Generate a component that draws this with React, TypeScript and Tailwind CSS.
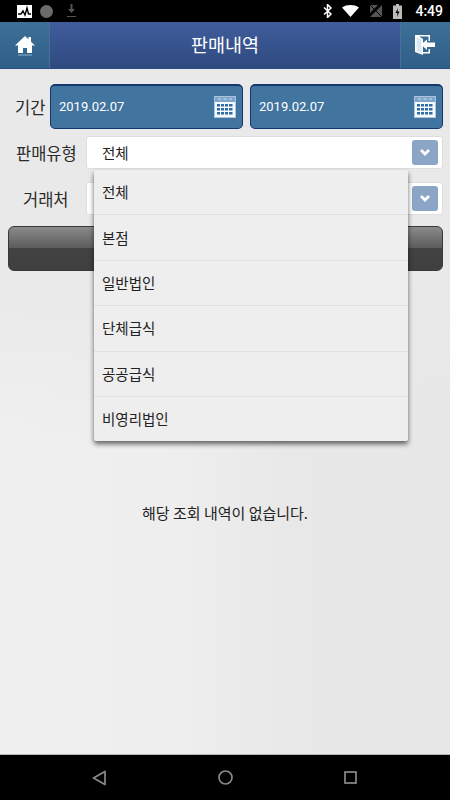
import { Fragment } from "react";

const font = { fontFamily: '"Noto Sans CJK KR", "Liberation Sans", sans-serif' };

const saleTypes = ["전체", "본점", "일반법인", "단체급식", "공공급식", "비영리법인"];

function CalendarIcon() {
  return (
    <svg width="22" height="22" viewBox="0 0 22 22" className="shrink-0">
      <rect x="0.5" y="0.5" width="21" height="21" fill="#f7fafd" stroke="#a9c4dc" />
      <rect x="1" y="1" width="20" height="5" fill="#7fa6ca" />
      <path d="M4 3h3M9.500 3h3M15 3h3" stroke="#c9dcec" strokeWidth="1" />
      <path
        d="M3 8h3v2.500H3zM7 8h3v2.500H7zM11 8h3v2.500h-3zM15 8h3.500v2.500H15zM3 12h3v2.500H3zM7 12h3v2.500H7zM11 12h3v2.500h-3zM15 12h3.500v2.500H15zM3 16h3v2.500H3zM7 16h3v2.500H7zM11 16h3v2.500h-3zM15 16h3.500v2.500H15z"
        fill="#2f6ba8"
      />
    </svg>
  );
}

function DateBox({ value }: { value: string }) {
  return (
    <div className="flex h-[45px] flex-1 items-center justify-between rounded-[5px] border border-[#14366f] border-t-2 bg-[#41749f] pl-[8px] pr-[6px]">
      <span className="text-[13px] text-white" style={{ fontFamily: '"Roboto", sans-serif' }}>
        {value}
      </span>
      <CalendarIcon />
    </div>
  );
}

function SelectBox({ value }: { value: string }) {
  return (
    <div className="flex h-[33px] flex-1 items-center justify-between rounded-[3px] border border-[#dedede] bg-white pl-[15px] pr-[4px]">
      <span className="text-[14.500px] leading-[20px] text-[#222]">{value}</span>
      <div className="flex h-[25px] w-[26px] items-center justify-center rounded-[3px] bg-[#8aa5c6]">
        <svg width="12" height="9" viewBox="0 0 12 9">
          <path d="M2 2l4 4 4-4" fill="none" stroke="#fff" strokeWidth="2.800" />
        </svg>
      </div>
    </div>
  );
}

function Label({ text, className }: { text: string; className: string }) {
  return <span className={`text-[16.500px] leading-[22px] text-[#2a2a2a] ${className}`}>{text}</span>;
}

export default function App() {
  return (
    <div className="flex h-[800px] w-[450px] flex-col overflow-hidden" style={font}>
      {/* status bar */}
      <div className="flex h-[22px] items-center justify-between bg-black pl-[17px] pr-[7px]">
        <div className="flex items-center gap-[8px]">
          <svg width="15" height="13" viewBox="0 0 15 13">
            <rect width="15" height="13" fill="#fff" />
            <path d="M1 9h3l2-3 2 4 2-7 1.500 6H14" fill="none" stroke="#000" strokeWidth="1.400" />
          </svg>
          <div className="h-[13px] w-[13px] rounded-full bg-[#6b6b6b]" />
          <svg width="11" height="14" viewBox="0 0 11 14" className="ml-[5px]">
            <path d="M4.500 0h2v5H9L5.500 9 2 5h2.500zM1 12h9v1H1z" fill="#555" />
          </svg>
        </div>
        <div className="flex items-center gap-[11px]">
          <svg width="10" height="14" viewBox="0 0 10 14">
            <path d="M1 3.500l7 6.500-3.500 3.500V.500L8 4 1 10.500" fill="none" stroke="#fff" strokeWidth="1.500" />
          </svg>
          <svg width="17" height="12" viewBox="0 0 17 12" className="-ml-[2px]">
            <path d="M0 2.500C4.500-.8 12.500-.8 17 2.500L8.500 12z" fill="#fff" />
          </svg>
          <svg width="12" height="12" viewBox="0 0 12 12">
            <path d="M0 12L12 0v12z" fill="#555" />
            <path d="M0 0h8L0 8z" fill="#555" />
            <path d="M0 0l12 12" stroke="#000" strokeWidth="1" />
          </svg>
          <svg width="9" height="15" viewBox="0 0 9 15">
            <path d="M3 0h3v1.500h3V15H0V1.500h3z" fill="#bbb" />
            <path d="M5 4L2.500 9H4.500L4 13 6.500 7.500H4.500z" fill="#000" />
          </svg>
          <span className="ml-[2px] text-[14px] font-medium text-white" style={{ fontFamily: '"Roboto", sans-serif' }}>
            4:49
          </span>
        </div>
      </div>

      {/* header */}
      <div className="flex h-[47px] items-stretch border-b border-[#2b4a7f] bg-gradient-to-b from-[#405d9c] to-[#2f4a80]">
        <div className="flex w-[50px] items-center justify-center border-r border-[#4a6f9c] bg-gradient-to-b from-[#3d7099] to-[#305f86]">
          <svg width="20" height="21" viewBox="0 0 20 21">
            <path d="M10 1L0 10.500h3V18h5v-5h4v5h5v-7.500h3L16 6.700V2h-2.500v2.300z" fill="#fff" />
            <path d="M3 20h14" stroke="#8fb0cc" strokeWidth="1" />
          </svg>
        </div>
        <div className="flex flex-1 items-center justify-center text-[18.500px] text-white">판매내역</div>
        <div className="flex w-[50px] items-center justify-center border-l border-[#4a6f9c] bg-gradient-to-b from-[#3d7099] to-[#305f86]">
          <svg width="20" height="21" viewBox="0 0 20 21" className="ml-[-1px]">
            <path d="M0 0h15v6h-1.500V1.500H4L8 4v13h5.500v-3H15v4.500H8V20L0 17z" fill="#fff" />
            <path d="M1.500 2v14l5 2.500V5z" fill="#dbe8f2" />
            <path d="M20 7.500h-8V4.500L6 9.500l6 5.500v-3h8z" fill="#fff" />
          </svg>
        </div>
      </div>

      {/* body */}
      <div className="relative flex-1 border-b border-[#b5b5b5] bg-[linear-gradient(to_bottom,#e9e9e9_0%,#e9e9e9_30%,rgba(233,233,233,0)_55%),linear-gradient(to_right,#f0f0f0_0%,#eeeeee_40%,#e8e8e8_65%,#e7e7e7_100%)]">
        <div className="flex flex-col pl-[8px] pr-[7px] pt-[15px]">
          <div className="flex items-center">
            <Label text="기간" className="ml-[7px] w-[35px]" />
            <div className="flex flex-1 gap-[7px]">
              <DateBox value="2019.02.07" />
              <DateBox value="2019.02.07" />
            </div>
          </div>
          <div className="mt-[7px] flex items-center">
            <Label text="판매유형" className="ml-[8px] w-[70px]" />
            <SelectBox value="전체" />
          </div>
          <div className="mt-[13px] flex items-center">
            <Label text="거래처" className="ml-[15px] w-[63px]" />
            <SelectBox value="" />
          </div>
          <div className="mt-[11px] h-[45px] rounded-[6px] border border-[#3a3a3a] bg-[linear-gradient(#8a8a8a_0%,#5c5c5c_49%,#434343_50%,#3f3f3f_100%)]" />
        </div>

        <p className="mt-[231px] text-center text-[15px] leading-[22px] text-[#222]">해당 조회 내역이 없습니다.</p>

        {/* dropdown */}
        <div className="absolute left-[94px] top-[101px] w-[314px] rounded-[2px] bg-[#eeeeee] shadow-[0_3px_5px_rgba(0,0,0,0.6)]">
          {saleTypes.map((item, i) => (
            <Fragment key={item}>
              {i > 0 && <div className="h-px bg-[#e0e0e0]" />}
              <div className="flex h-[44.400px] items-center pl-[8px] text-[14.500px] text-[#222]">{item}</div>
            </Fragment>
          ))}
        </div>
      </div>

      {/* nav bar */}
      <div className="flex h-[45px] items-center justify-between bg-black pl-[92px] pr-[93px]">
        <svg width="14" height="16" viewBox="0 0 14 16">
          <path d="M13 1.500v13L1.500 8z" fill="none" stroke="#8a8a8a" strokeWidth="1.700" strokeLinejoin="round" />
        </svg>
        <svg width="15" height="15" viewBox="0 0 15 15">
          <circle cx="7.500" cy="7.500" r="6.500" fill="none" stroke="#8a8a8a" strokeWidth="1.700" />
        </svg>
        <svg width="13" height="13" viewBox="0 0 13 13">
          <rect x="1" y="1" width="11" height="11" fill="none" stroke="#8a8a8a" strokeWidth="1.700" />
        </svg>
      </div>
    </div>
  );
}
